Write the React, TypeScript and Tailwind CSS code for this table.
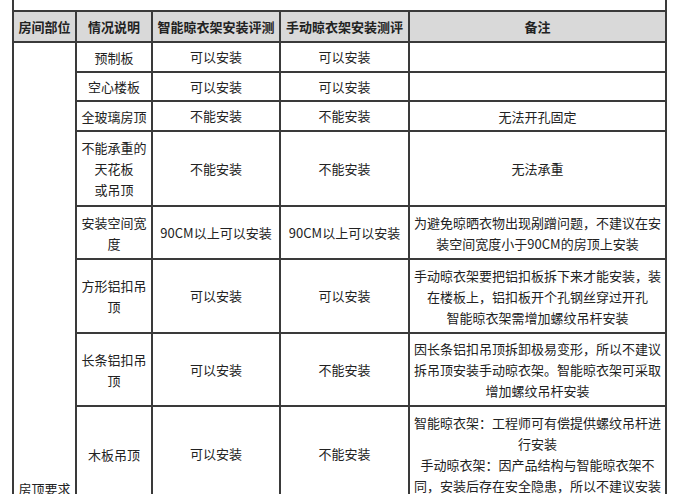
import React from "react";

type Row = {
  part: string[];
  smart: string;
  manual: string;
  note: string[];
  h: string;
};

const rows: Row[] = [
  { part: ["预制板"], smart: "可以安装", manual: "可以安装", note: [], h: "h-[30px]" },
  { part: ["空心楼板"], smart: "可以安装", manual: "可以安装", note: [], h: "h-[29px]" },
  { part: ["全玻璃房顶"], smart: "不能安装", manual: "不能安装", note: ["无法开孔固定"], h: "h-[30px]" },
  {
    part: ["不能承重的", "天花板", "或吊顶"],
    smart: "不能安装",
    manual: "不能安装",
    note: ["无法承重"],
    h: "h-[75px]",
  },
  {
    part: ["安装空间宽", "度"],
    smart: "90CM以上可以安装",
    manual: "90CM以上可以安装",
    note: ["为避免晾晒衣物出现剐蹭问题，不建议在安", "装空间宽度小于90CM的房顶上安装"],
    h: "h-[53px]",
  },
  {
    part: ["方形铝扣吊", "顶"],
    smart: "可以安装",
    manual: "可以安装",
    note: [
      "手动晾衣架要把铝扣板拆下来才能安装，装",
      "在楼板上，铝扣板开个孔钢丝穿过开孔",
      "智能晾衣架需增加螺纹吊杆安装",
    ],
    h: "h-[74px]",
  },
  {
    part: ["长条铝扣吊", "顶"],
    smart: "可以安装",
    manual: "不能安装",
    note: [
      "因长条铝扣吊顶拆卸极易变形，所以不建议",
      "拆吊顶安装手动晾衣架。智能晾衣架可采取",
      "增加螺纹吊杆安装",
    ],
    h: "h-[73px]",
  },
  {
    part: ["木板吊顶"],
    smart: "可以安装",
    manual: "不能安装",
    note: [
      "智能晾衣架：工程师可有偿提供螺纹吊杆进",
      "行安装",
      "手动晾衣架：因产品结构与智能晾衣架不",
      "同，安装后存在安全隐患，所以不建议安装",
    ],
    h: "h-[96px]",
  },
];

const cell = "border-2 border-[#3a3a3a] text-center align-middle p-0";

function Lines({ lines }: { lines: string[] }) {
  return (
    <div className="flex flex-col items-center leading-[21px] whitespace-nowrap">
      {lines.map((l, i) => (
        <span key={i}>{l}</span>
      ))}
    </div>
  );
}

export default function App() {
  return (
    <div
      className="min-h-screen bg-white pl-[12px] text-[13px] text-[#222]"
      style={{ fontFamily: '"Noto Sans CJK SC", "Noto Sans", sans-serif' }}
    >
      <table className="table-fixed border-collapse w-[655px]">
        <colgroup>
          <col className="w-[63px]" />
          <col className="w-[76px]" />
          <col className="w-[128px]" />
          <col className="w-[129px]" />
          <col />
        </colgroup>
        <tbody>
          {/* tail of the row above, cut off by the frame */}
          <tr className="h-[11px]">
            <td colSpan={5} className="border-2 border-t-0 border-[#3a3a3a] p-0" />
          </tr>

          <tr className="h-[31px] bg-[#d9d9d9] font-bold">
            <td className={cell}>房间部位</td>
            <td className={cell}>情况说明</td>
            <td className={cell}>智能晾衣架安装评测</td>
            <td className={cell}>手动晾衣架安装测评</td>
            <td className={cell}>备注</td>
          </tr>

          {rows.map((r, i) => (
            <tr key={i} className={r.h}>
              {i === 0 && (
                <td rowSpan={rows.length + 1} className={cell}>
                  房顶要求
                </td>
              )}
              <td className={cell}>
                <Lines lines={r.part} />
              </td>
              <td className={`${cell} whitespace-nowrap`}>{r.smart}</td>
              <td className={`${cell} whitespace-nowrap`}>{r.manual}</td>
              <td className={cell}>
                <Lines lines={r.note} />
              </td>
            </tr>
          ))}

          {/* rest of the merged section, below the frame */}
          <tr className="h-[434px]">
            <td className={cell} />
            <td className={cell} />
            <td className={cell} />
            <td className={cell} />
          </tr>
        </tbody>
      </table>
    </div>
  );
}
